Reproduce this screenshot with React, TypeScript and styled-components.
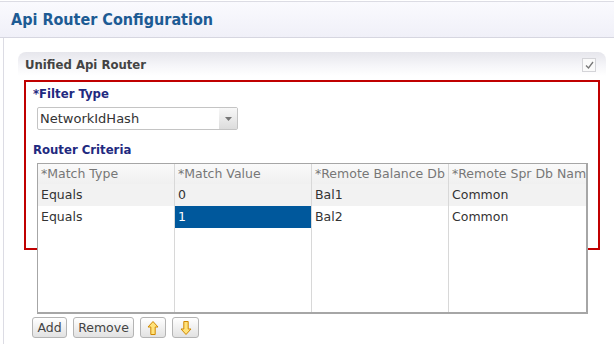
import styled, { createGlobalStyle } from 'styled-components';

const Global = createGlobalStyle`
  html, body { margin: 0; padding: 0; background: #fff; }
  body { font-family: "DejaVu Sans", Verdana, sans-serif; font-size: 12px; color: #333; }
  *, *::before, *::after { box-sizing: border-box; }
`;

const condensed = `"DejaVu Sans Condensed", "DejaVu Sans", Verdana, sans-serif`;

const Page = styled.div`
  width: 614px;
  height: 344px;
  overflow: hidden;
  position: relative;
`;

const Header = styled.div`
  height: 37px;
  margin-top: 1px;
  border-top: 1px solid #dcdce4;
  border-bottom: 1px solid #d6d6e0;
  background: linear-gradient(#fafafe, #f0f0f8);
  display: flex;
  align-items: center;
  padding-left: 11px;
`;

const Title = styled.h1`
  margin: 0;
  font-family: ${condensed};
  font-stretch: condensed;
  font-size: 16px;
  font-weight: bold;
  color: #1d5b94;
`;

const Body = styled.div`
  margin-left: 3px;
  border-left: 1px solid #dcdce4;
  padding: 14px 8px 0 14px;
  height: 306px;
`;

const Panel = styled.div`
  border-radius: 8px 8px 0 0;
  background: linear-gradient(#e6e6ec 0px, #f6f6f9 14px, #fff 24px);
`;

const PanelHead = styled.div`
  height: 24px;
  display: flex;
  align-items: center;
  justify-content: space-between;
  padding: 0 10px 0 7px;
`;

const PanelTitle = styled.span`
  font-family: ${condensed};
  font-stretch: condensed;
  font-weight: bold;
  font-size: 13px;
  color: #444;
`;

const Check = styled.span`
  width: 14px;
  height: 14px;
  border: 1px solid #d4d4d8;
  background: #fafafa;
  display: flex;
  align-items: center;
  justify-content: center;
  margin-top: 2px;
`;

const Highlight = styled.div`
  margin: 4px 6px 0 6px;
  height: 170px;
  border: 2px solid #c00000;
  padding: 4px 0 0 7px;
  position: relative;
`;

const Label = styled.div`
  font-family: ${condensed};
  font-stretch: condensed;
  font-weight: bold;
  font-size: 13px;
  color: #1f2a80;
  height: 16px;
  line-height: 16px;
`;

const Select = styled.div`
  margin: 5px 0 12px 4px;
  width: 201px;
  height: 23px;
  border: 1px solid #c4c4c4;
  border-radius: 2px;
  display: flex;
  background: #fff;
`;

const SelectText = styled.span`
  flex: 1;
  padding-left: 2px;
  line-height: 21px;
  font-size: 13px;
  color: #333;
`;

const SelectArrow = styled.span`
  width: 18px;
  background: linear-gradient(#f8f8f8, #dcdcdc);
  display: flex;
  align-items: center;
  justify-content: center;
`;

const Table = styled.div`
  position: absolute;
  left: 11px;
  top: 81px;
  width: 551px;
  height: 151px;
  border: 1px solid #a6a6a6;
  border-right-width: 2px;
  border-bottom-width: 2px;
  background: #fff;
  display: grid;
  grid-template-columns: 137px 137px 137px 137px;
  grid-template-rows: 20px 22px 22px 1fr;
  overflow: hidden;
`;

const Cell = styled.div<{ $head?: boolean; $alt?: boolean; $sel?: boolean; $last?: boolean }>`
  border-right: ${p => (p.$last ? 'none' : '1px solid #d8d8d8')};
  background: ${p =>
    p.$sel ? '#00589c' : p.$head ? 'linear-gradient(#fafafa, #f0f0f0)' : p.$alt ? '#f2f2f2' : '#fff'};
  color: ${p => (p.$sel ? '#fff' : p.$head ? '#777' : '#333')};
  padding-left: 3px;
  line-height: ${p => (p.$head ? '20px' : '22px')};
  font-size: 12.5px;
  white-space: nowrap;
  overflow: hidden;
`;

const Buttons = styled.div`
  display: flex;
  gap: 6px;
  position: absolute;
  left: 32px;
  top: 317px;
`;

const Btn = styled.button<{ $w: number }>`
  height: 21px;
  width: ${p => p.$w}px;
  padding: 0;
  border: 1px solid #b4b4b4;
  border-radius: 3px;
  background: linear-gradient(#ffffff, #e2e2e2);
  font-family: inherit;
  font-size: 12.5px;
  color: #444;
  display: flex;
  align-items: center;
  justify-content: center;
`;

const Arrow = ({ down }: { down?: boolean }) => (
  <svg width="12" height="16" viewBox="0 0 12 16" style={{ transform: down ? 'rotate(180deg)' : undefined }}>
    <path d="M6 1.5 L11 7 L8.2 7 L8.2 14.5 L3.8 14.5 L3.8 7 L1 7 Z" fill="#ffe27a" stroke="#d08800" strokeWidth="1" strokeLinejoin="round" />
  </svg>
);

const head = ['*Match Type', '*Match Value', '*Remote Balance Db', '*Remote Spr Db Name'];
const rows = [
  ['Equals', '0', 'Bal1', 'Common'],
  ['Equals', '1', 'Bal2', 'Common'],
];

export default function App() {
  return (
    <Page>
      <Global />
      <Header>
        <Title>Api Router Configuration</Title>
      </Header>
      <Body>
        <Panel>
          <PanelHead>
            <PanelTitle>Unified Api Router</PanelTitle>
            <Check>
              <svg width="9" height="8" viewBox="0 0 9 8">
                <path d="M1 4.5 L3.5 7 L8 1" fill="none" stroke="#777" strokeWidth="1.3" />
              </svg>
            </Check>
          </PanelHead>
          <Highlight>
            <Label>*Filter Type</Label>
            <Select>
              <SelectText>NetworkIdHash</SelectText>
              <SelectArrow>
                <svg width="7" height="4" viewBox="0 0 7 4"><path d="M0 0 H7 L3.5 4 Z" fill="#777" /></svg>
              </SelectArrow>
            </Select>
            <Label>Router Criteria</Label>
            <Table>
              {head.map((h, i) => (
                <Cell key={h} $head $last={i === 3}>{h}</Cell>
              ))}
              {rows.map((r, ri) =>
                r.map((c, ci) => (
                  <Cell key={`${ri}-${ci}`} $alt={ri === 0} $sel={ri === 1 && ci === 1} $last={ci === 3}>
                    {c}
                  </Cell>
                ))
              )}
              {[0, 1, 2, 3].map(i => (
                <Cell key={`e${i}`} $last={i === 3} />
              ))}
            </Table>
          </Highlight>
        </Panel>
      </Body>
      <Buttons>
        <Btn $w={35}>Add</Btn>
        <Btn $w={61}>Remove</Btn>
        <Btn $w={26}><Arrow /></Btn>
        <Btn $w={27}><Arrow down /></Btn>
      </Buttons>
    </Page>
  );
}
